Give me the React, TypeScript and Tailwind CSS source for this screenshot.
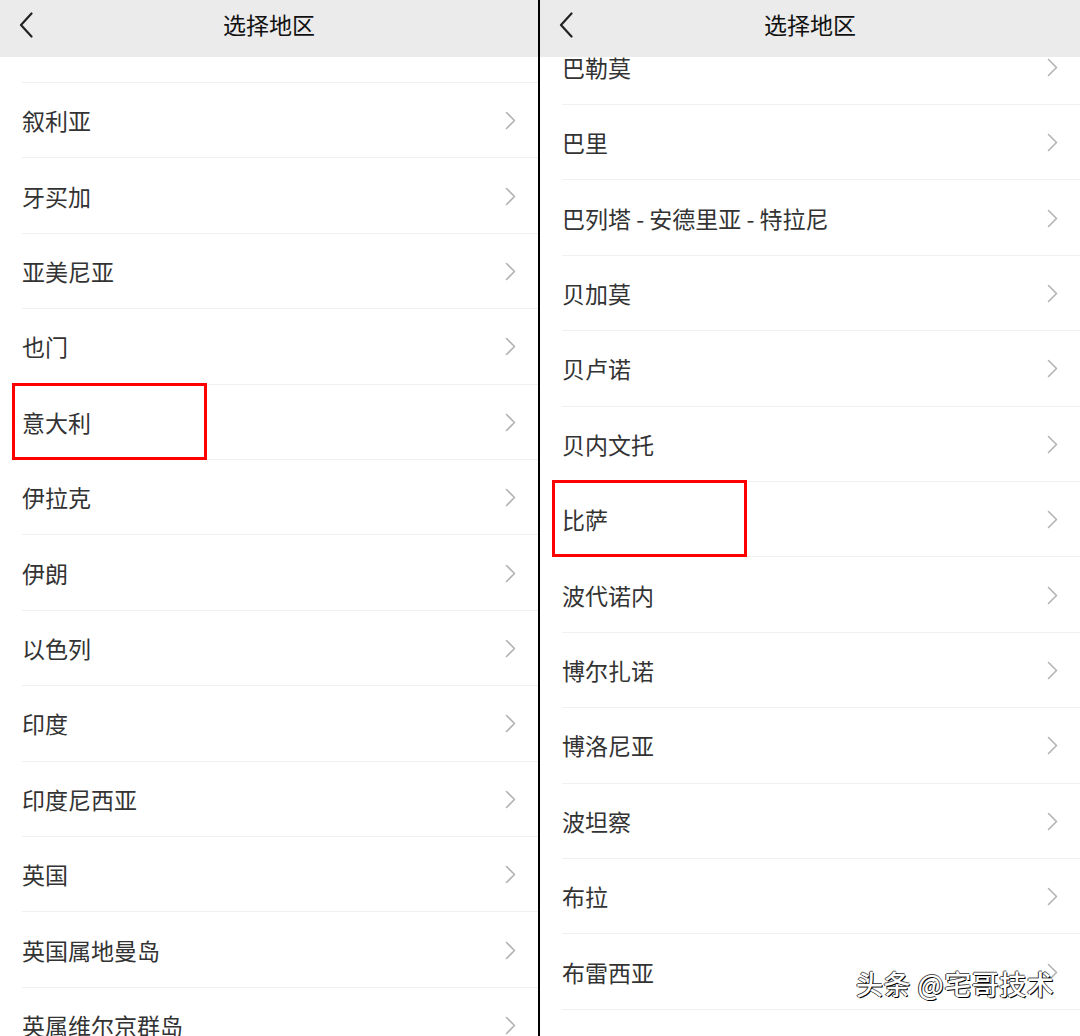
const FONT = "font-['Noto_Sans_CJK_SC','Noto_Sans',sans-serif]";

type PanelProps = {
  items: string[];
  offset: string;
  highlight: number;
  width: string;
};

function BackIcon() {
  return (
    <svg width="14" height="26" viewBox="0 0 14 26" fill="none">
      <path d="M12.5 1.5 L2 13 L12.5 24.5" stroke="#222" strokeWidth="2.2" strokeLinecap="round" strokeLinejoin="round" />
    </svg>
  );
}

function Chevron() {
  return (
    <svg width="11" height="19" viewBox="0 0 11 19" fill="none">
      <path d="M1.5 1.5 L9.5 9.5 L1.5 17.5" stroke="#b3b3b3" strokeWidth="1.6" strokeLinecap="round" strokeLinejoin="round" />
    </svg>
  );
}

function Panel({ items, offset, highlight, width }: PanelProps) {
  return (
    <div className={`${width} h-full flex flex-col overflow-hidden bg-white`}>
      {/* Header */}
      <div className="relative z-10 h-[57px] shrink-0 bg-[#ebebeb] flex items-center pb-[8px]">
        <div className="pl-[19px] flex items-center">
          <BackIcon />
        </div>
        <div className="absolute inset-0 pb-[8px] flex items-center justify-center text-[23px] text-[#111]">
          选择地区
        </div>
      </div>

      {/* List */}
      <div className={`flex flex-col ${offset}`}>
        {items.map((name, i) => (
          <div
            key={i}
            className="relative h-[75.42px] shrink-0 flex items-center justify-between pl-[22px] pr-[22px]"
          >
            <span className="text-[23px] text-[#333] leading-none">{name}</span>
            <Chevron />
            <div className="absolute left-[22px] right-0 bottom-0 h-px bg-[#f0f0f0]" />
            {i === highlight && (
              <div className="absolute left-[12px] top-[-2px] w-[195px] h-[77px] border-[3px] border-[#ff0000]" />
            )}
          </div>
        ))}
      </div>
    </div>
  );
}

export default function App() {
  const left = [
    "",
    "叙利亚",
    "牙买加",
    "亚美尼亚",
    "也门",
    "意大利",
    "伊拉克",
    "伊朗",
    "以色列",
    "印度",
    "印度尼西亚",
    "英国",
    "英国属地曼岛",
    "英属维尔京群岛",
  ];
  const right = [
    "巴勒莫",
    "巴里",
    "巴列塔 - 安德里亚 - 特拉尼",
    "贝加莫",
    "贝卢诺",
    "贝内文托",
    "比萨",
    "波代诺内",
    "博尔扎诺",
    "博洛尼亚",
    "波坦察",
    "布拉",
    "布雷西亚",
    "",
  ];

  return (
    <div className={`relative w-[1080px] h-[1036px] overflow-hidden flex bg-white ${FONT}`}>
      <Panel items={left} offset="mt-[-49.4px]" highlight={5} width="w-[538px]" />
      <div className="w-[2px] h-full bg-black shrink-0" />
      <Panel items={right} offset="mt-[-27.4px]" highlight={6} width="w-[540px]" />

      {/* watermark */}
      <div className="absolute left-[856px] top-[970px] text-[27px] font-medium tracking-[0.5px] text-white leading-none [text-shadow:1px_1px_0_#000,-1px_0_0_#333,0_-1px_0_#555]">
        头条 @宅哥技术
      </div>
    </div>
  );
}
